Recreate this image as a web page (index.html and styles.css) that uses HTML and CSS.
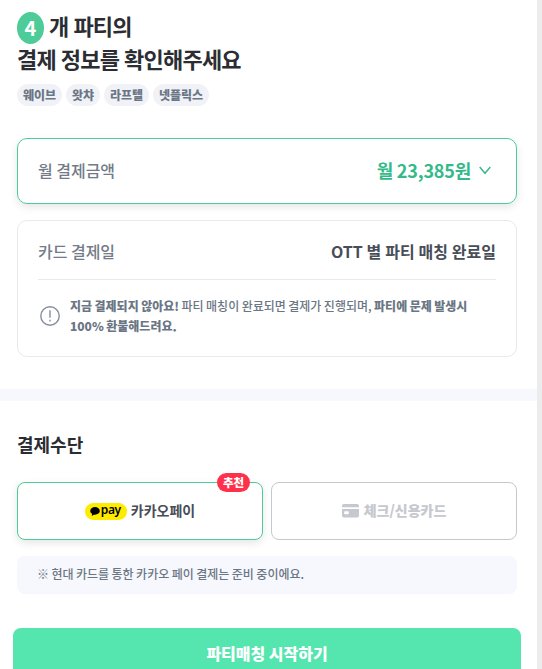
FILE: index.html
```html
<!DOCTYPE html>
<html lang="ko">
<head>
    <meta charset="UTF-8">
    <meta name="viewport" content="width=device-width, initial-scale=1.0">
    <title>결제 정보 확인</title>
    <link rel="stylesheet" href="styles.css">
</head>
<body>
    <div class="page">
        <section class="summary">
            <h1 class="title">
                <span class="title-row"><span class="count">4</span><span>개 파티의</span></span>
                <span class="title-row title-main">결제 정보를 확인해주세요</span>
            </h1>
            <ul class="tags">
                <li>웨이브</li>
                <li>왓챠</li>
                <li>라프텔</li>
                <li>넷플릭스</li>
            </ul>

            <!-- 월 결제금액 -->
            <div class="card card-amount">
                <span class="label">월 결제금액</span>
                <span class="amount">월 23,385원</span>
                <svg class="chevron" width="12" height="9" viewBox="0 0 12 9" fill="none" stroke="#35b98a" stroke-width="1.4">
                    <path d="M0.7 1L6 7.3L11.3 1"/>
                </svg>
            </div>

            <!-- 카드 결제일 -->
            <div class="card card-date">
                <div class="date-row">
                    <span class="label">카드 결제일</span>
                    <span class="date">OTT 별 파티 매칭 완료일</span>
                </div>
                <div class="notice">
                    <svg class="notice-icon" width="20" height="20" viewBox="0 0 20 20" fill="none" stroke="#868e9b" stroke-width="1.4">
                        <circle cx="10" cy="10" r="9.2"/>
                        <path d="M10 4.2V11.8M10 13.8V15.6"/>
                    </svg>
                    <p><b>지금 결제되지 않아요!</b> 파티 매칭이 완료되면 결제가 진행되며, <b>파티에 문제 발생시<br>100% 환불해드려요.</b></p>
                </div>
            </div>
        </section>

        <div class="divider"></div>

        <section class="payment">
            <h2>결제수단</h2>
            <div class="methods">
                <button class="method selected">
                    <span class="badge">추천</span>
                    <span class="kakao">
                        <svg width="10" height="9" viewBox="0 0 10 9" fill="#000">
                            <ellipse cx="5" cy="3.9" rx="4.8" ry="3.8"/>
                            <path d="M2.2 6L1.8 9L5 7Z"/>
                        </svg>
                        <span>pay</span>
                    </span>
                    <span class="method-name">카카오페이</span>
                </button>
                <button class="method">
                    <svg class="card-icon" width="17" height="14" viewBox="0 0 17 14" fill="#c6c8d0">
                        <path d="M2 0H15Q17 0 17 2V3.2H0V2Q0 0 2 0Z"/>
                        <path fill-rule="evenodd" d="M0 5H17V11.5Q17 13.5 15 13.5H2Q0 13.5 0 11.5ZM3 7.3Q2.2 7.3 2.2 8V9.5Q2.2 10.3 3 10.3H6Q6.8 10.3 6.8 9.5V8Q6.8 7.3 6 7.3Z"/>
                    </svg>
                    <span class="method-name">체크/신용카드</span>
                </button>
            </div>
            <p class="info">※ 현대 카드를 통한 카카오 페이 결제는 준비 중이에요.</p>
        </section>

        <button class="start">파티매칭 시작하기</button>
    </div>
</body>
</html>
```
FILE: styles.css
```css
/* Global Style */
* {
    box-sizing: border-box;
}

body {
    margin: 0;
    height: 669px;
    overflow: hidden;
    background-color: #ececec;
    color: #2b2d33;
    font-family: 'Noto Sans CJK KR', sans-serif;
    white-space: nowrap;
}

button {
    font-family: inherit;
    padding: 0;
}

.page {
    width: 537px;
    height: 700px;
    background-color: #fff;
}

/* 상단 요약 */
.summary {
    height: 389px;
    padding: 12px 20px 0 17px;
}

.title {
    margin: 0;
    font-size: 22px;
    font-weight: 700;
    line-height: 32px;
    letter-spacing: -0.8px;
    word-spacing: -0.4px;
}

.title-row {
    display: flex;
    gap: 5px;
}

.title-row > span:last-child {
    margin-top: -3px;
}

.title-main {
    height: 32px;
    line-height: 28px;
}

.count {
    width: 27px;
    height: 32px;
    border-radius: 50%;
    background-color: #4dcb99;
    color: #fff;
    font-size: 20px;
    font-weight: 700;
    text-align: center;
    letter-spacing: 0;
}

.tags {
    display: flex;
    gap: 4px;
    margin: 8px 0 0;
    padding: 0;
    list-style: none;
}

.tags li {
    height: 22px;
    padding: 0 6px;
    border-radius: 11px;
    background-color: #f0f2f7;
    color: #6b7684;
    font-size: 12px;
    font-weight: 900;
    line-height: 21px;
    letter-spacing: -0.05px;
}

.card {
    border: 1px solid #e9e9eb;
    border-radius: 10px;
}

.card-amount {
    display: flex;
    align-items: center;
    height: 66px;
    margin-top: 32px;
    padding: 0 25px 2px 20px;
    border-color: #4dcb99;
    box-shadow: 0 3px 8px rgba(0, 0, 0, 0.1);
}

.label {
    color: #737b88;
    font-size: 16px;
    font-weight: 500;
    word-spacing: -1px;
}

.amount {
    margin-left: auto;
    color: #35b98a;
    font-size: 18px;
    font-weight: 700;
    letter-spacing: -0.2px;
    word-spacing: -1px;
}

.chevron {
    margin-left: 8px;
}

.card-date {
    height: 137px;
    margin-top: 16px;
    padding: 0 20px;
}

.date-row {
    display: flex;
    align-items: center;
    justify-content: space-between;
    height: 59px;
    padding-top: 2px;
    border-bottom: 1px solid #e9e9eb;
}

.date {
    color: #484d57;
    font-size: 16px;
    font-weight: 700;
    word-spacing: -0.6px;
}

.notice {
    display: flex;
    align-items: center;
    gap: 10px;
    height: 72px;
    padding-left: 2px;
    color: #6b7684;
    font-size: 12px;
    line-height: 20px;
    word-spacing: -0.9px;
}

.notice p {
    margin: 0;
    font-weight: 500;
}

.notice b {
    font-weight: 900;
}

.divider {
    height: 12px;
    background-color: #f7f8fd;
}

/* 결제수단 */
.payment {
    padding: 30px 20px 0 17px;
}

.payment h2 {
    margin: 0;
    font-size: 18px;
    font-weight: 700;
    line-height: 26px;
}

.methods {
    display: flex;
    gap: 8px;
    margin-top: 25px;
}

.method {
    position: relative;
    display: flex;
    flex: 1;
    align-items: center;
    justify-content: center;
    gap: 5px;
    height: 58px;
    border: 1px solid #c6c8d0;
    border-radius: 8px;
    background-color: #fff;
    color: #c6c8d0;
}

.selected {
    gap: 4px;
    border-color: #4dcb99;
    color: #484d57;
    box-shadow: 0 3px 8px rgba(0, 0, 0, 0.1);
}

.method-name {
    margin-top: -2px;
    font-size: 14px;
    font-weight: 900;
    line-height: 20px;
}

.selected .method-name {
    font-weight: 700;
}

.badge {
    position: absolute;
    top: -10px;
    right: 12px;
    width: 33px;
    height: 19px;
    border-radius: 10px;
    background-color: #ff304b;
    color: #fff;
    font-size: 11.5px;
    font-weight: 900;
    line-height: 19px;
}

.kakao {
    display: flex;
    align-items: center;
    justify-content: center;
    gap: 1px;
    width: 42px;
    height: 17px;
    padding-right: 1px;
    border-radius: 9px;
    background-color: #ffeb00;
    color: #000;
    font-family: 'Noto Sans', sans-serif;
    font-size: 12px;
    font-weight: 600;
    line-height: 14px;
    letter-spacing: -0.3px;
}

.kakao span {
    margin-top: -3px;
}

.info {
    height: 38px;
    margin: 16px 0 0;
    padding-left: 20px;
    border-radius: 8px;
    background-color: #f7f8fd;
    color: #6b7684;
    font-size: 12px;
    font-weight: 500;
    line-height: 36px;
    word-spacing: -0.9px;
}

.start {
    display: block;
    width: 508px;
    height: 52px;
    margin: 34px 0 0 13px;
    padding-bottom: 2px;
    border: none;
    border-radius: 8px;
    background-color: #55e5af;
    color: #fff;
    font-size: 16px;
    font-weight: 900;
    word-spacing: -1px;
}
```
